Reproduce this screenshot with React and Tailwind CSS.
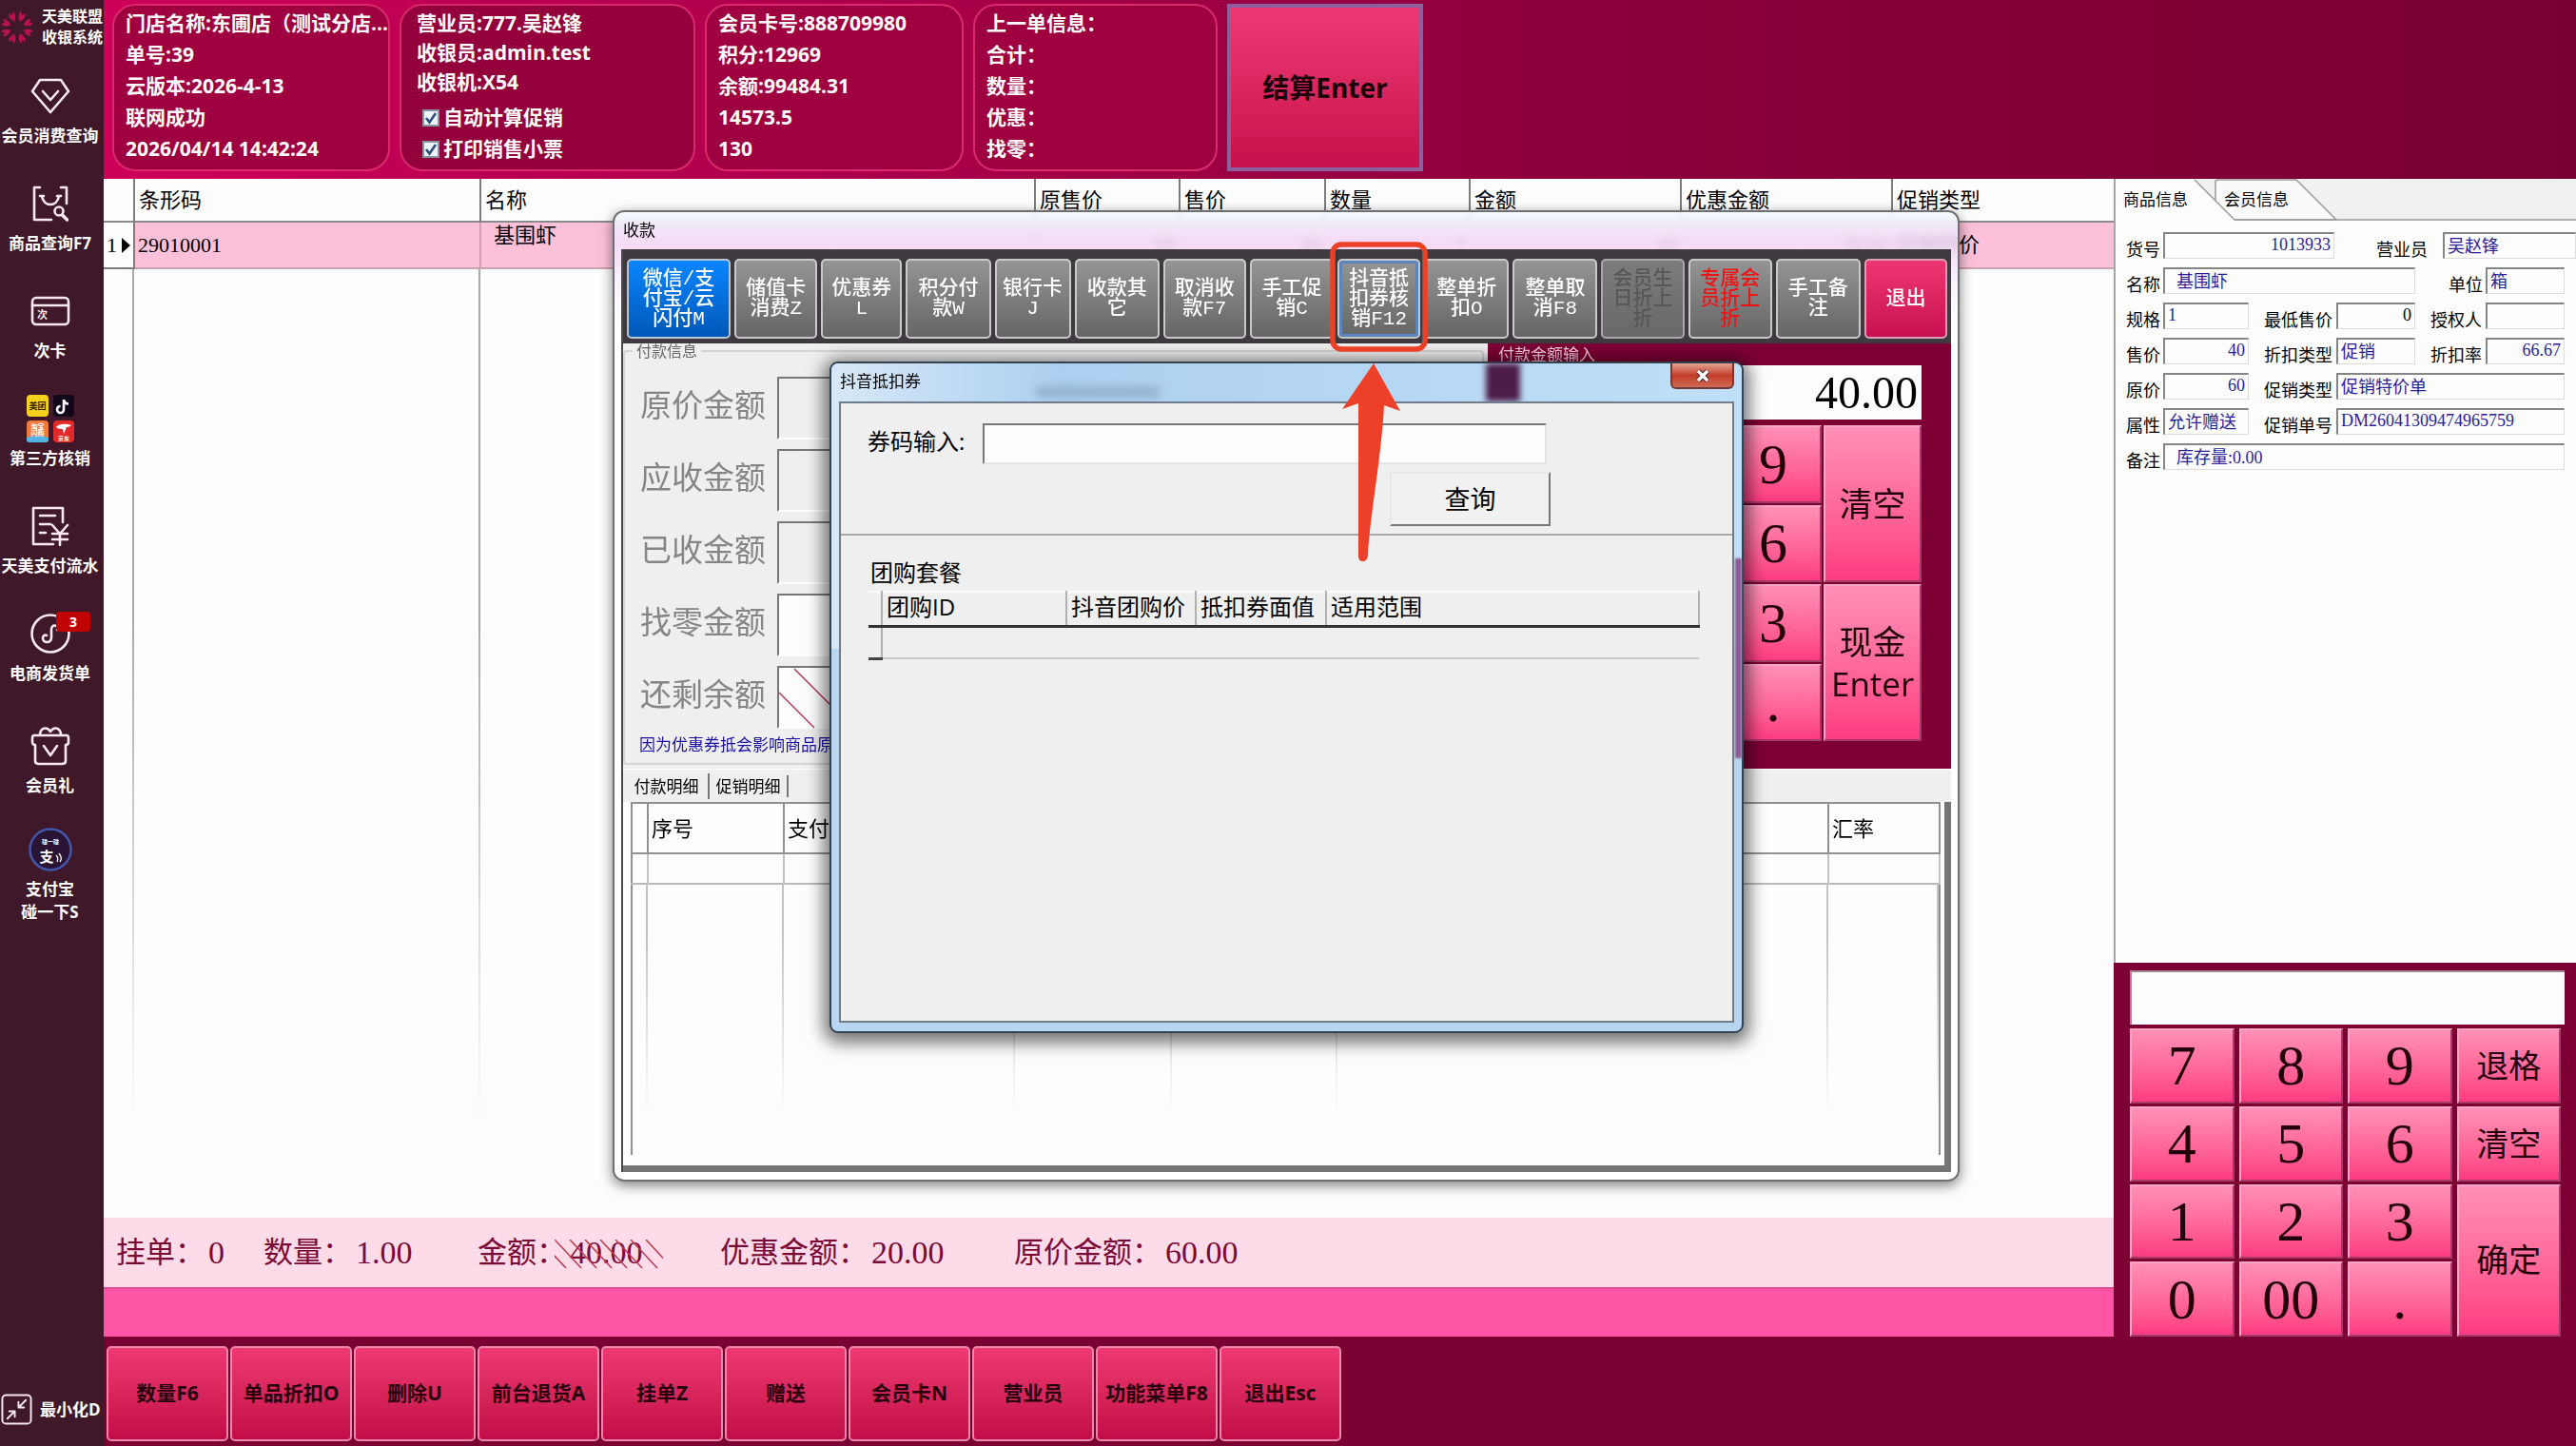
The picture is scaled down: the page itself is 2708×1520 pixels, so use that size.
import { useState } from "react";

const storeInfo = ["门店名称:东圃店（测试分店...", "单号:39", "云版本:2026-4-13", "联网成功", "2026/04/14 14:42:24"];
const memberInfo = ["会员卡号:888709980", "积分:12969", "余额:99484.31", "14573.5", "130"];
const lastOrder = ["上一单信息：", "合计：", "数量：", "优惠：", "找零："];

const payButtons = [
  { text: "微信/支\n付宝/云\n闪付M", tone: "blue" },
  { text: "储值卡\n消费Z" },
  { text: "优惠券\nL" },
  { text: "积分付\n款W" },
  { text: "银行卡\nJ" },
  { text: "收款其\n它" },
  { text: "取消收\n款F7" },
  { text: "手工促\n销C" },
  { text: "抖音抵\n扣券核\n销F12", tone: "active" },
  { text: "整单折\n扣O" },
  { text: "整单取\n消F8" },
  { text: "会员生\n日折上\n折", tone: "off" },
  { text: "专属会\n员折上\n折", tone: "red" },
  { text: "手工备\n注" },
  { text: "退出", tone: "pink" },
];

const payTones = {
  gray: "border-[#c9c9c9] bg-linear-to-b from-[#949494] to-[#666666] text-white",
  blue: "border-[#b9c6d6] bg-linear-to-b from-[#0a86ff] to-[#0058b8] text-white",
  active: "border-[#c9c9c9] bg-linear-to-b from-[#949494] to-[#666666] text-white shadow-[inset_0_0_0_3px_#5b86bd]",
  off: "border-[#a8a8a8] bg-linear-to-b from-[#7c7c7c] to-[#686868] text-[#575757]",
  red: "border-[#c9c9c9] bg-linear-to-b from-[#949494] to-[#666666] text-[#f01414]",
  pink: "border-[#d9a0b8] bg-linear-to-b from-[#ee3572] to-[#c80f50] text-white",
};

const bottomButtons = ["数量F6", "单品折扣O", "删除U", "前台退货A", "挂单Z", "赠送", "会员卡N", "营业员", "功能菜单F8", "退出Esc"];

function InfoPanel({ lines, className }) {
  return (
    <ul className={`h-[176px] rounded-[24px] border-2 border-[#d92a6c] bg-[#9e0040] pt-[2px] pl-3 ${className}`}>
      {lines.map((line) => (
        <li key={line} className="h-[33px] whitespace-nowrap leading-[33px]">
          {line}
        </li>
      ))}
    </ul>
  );
}

function CheckItem({ id, label }) {
  const [checked, setChecked] = useState(true);
  return (
    <div className="flex h-[33px] items-center gap-1">
      <span className="grid size-[18px]">
        <input
          id={id}
          type="checkbox"
          checked={checked}
          onChange={(e) => setChecked(e.target.checked)}
          className="col-start-1 row-start-1 size-[18px] appearance-none border-2 border-[#8796a5] bg-[#eef3f7]"
        />
        {checked && (
          <svg viewBox="0 0 18 18" className="pointer-events-none col-start-1 row-start-1 size-[18px]">
            <path d="M4 9l3.5 4.5L14 4" fill="none" stroke="#2f4f7a" strokeWidth="2.6" />
          </svg>
        )}
      </span>
      <label htmlFor={id}>{label}</label>
    </div>
  );
}

function Header() {
  return (
    <header className="flex h-[188px] gap-[10px] bg-linear-to-r from-[#cd0059] via-[#8c003b] via-60% to-[#780031] pt-1 pl-[9px] text-[21px] font-bold text-white">
      <InfoPanel lines={storeInfo} className="w-[292px]" />
      <div className="h-[176px] w-[311px] rounded-[24px] border-2 border-[#d92a6c] bg-[#94003c] pt-[2px] pl-4">
        <p className="h-[31px] leading-[33px]">营业员:777.吴赵锋</p>
        <p className="h-[31px] leading-[33px]">收银员:admin.test</p>
        <p className="mb-1 h-[33px] leading-[33px]">收银机:X54</p>
        <div className="pl-[6px]">
          <CheckItem id="auto-promo" label="自动计算促销" />
          <CheckItem id="print-ticket" label="打印销售小票" />
        </div>
      </div>
      <InfoPanel lines={memberInfo} className="w-[272px]" />
      <InfoPanel lines={lastOrder} className="w-[257px]" />
      <button className="h-[176px] w-[206px] border-4 border-[#8d5f9c] bg-linear-to-b from-[#ee3874] to-[#c60f4b] text-[28px] font-bold text-[#1a0008]">
        结算Enter
      </button>
    </header>
  );
}

function SideItem({ label, children, className = "mt-9" }) {
  return (
    <button className={`relative flex w-full flex-col items-center gap-[7px] pr-1 text-[17px] leading-6 text-white ${className}`}>
      <span className="flex h-[46px] items-center justify-center">{children}</span>
      <span className="whitespace-pre">{label}</span>
    </button>
  );
}

function Sidebar() {
  const line = { fill: "none", stroke: "#fbe9f1", strokeWidth: 2.6, strokeLinejoin: "round", strokeLinecap: "round" };
  return (
    <nav className="flex w-[109px] shrink-0 flex-col bg-[#3f1829] font-bold">
      <div className="flex h-[78px] gap-2 pt-[6px]">
        <svg viewBox="0 0 36 36" className="mt-[5px] size-9">
          {[22, 67, 112, 157, 202, 247, 292, 337].map((a) => (
            <path key={a} d="M18 11C14 7 14 3 15.500 1L18 4L20.500 1C22 3 22 7 18 11Z" fill="#b81150" transform={`rotate(${a} 18 18)`} />
          ))}
        </svg>
        <p className="text-[16px] leading-[22px] text-white">
          天美联盟
          <br />
          收银系统
        </p>
      </div>
      <SideItem label="会员消费查询" className="">
        <svg viewBox="0 0 42 38" className="h-[38px] w-[42px]">
          <path d="M10 2h22l8 12-19 22L2 14z" {...line} />
          <path d="M13 14l8 9 8-9" {...line} />
        </svg>
      </SideItem>
      <SideItem label="商品查询F7">
        <svg viewBox="0 0 38 38" className="size-[38px]">
          <path d="M8 2H2v34h18M30 2h6v17" {...line} />
          <path d="M10 11c2 12 16 12 18 0M8 11h4M26 11h4" {...line} />
          <circle cx="28" cy="27" r="4.500" {...line} />
          <path d="M31.500 31l5 5" {...line} strokeWidth="3.500" />
        </svg>
      </SideItem>
      <SideItem label="次卡">
        <svg viewBox="0 0 42 32" className="h-8 w-[42px]">
          <rect x="2" y="2" width="38" height="28" rx="4" {...line} />
          <path d="M2 10h38" {...line} />
          <text x="7" y="24" fontSize="11" fill="#fbe9f1">次</text>
        </svg>
      </SideItem>
      <SideItem label="第三方核销">
        <svg viewBox="0 0 50 50" className="size-[50px]">
          <rect width="23" height="23" rx="4" fill="#f5d01c" />
          <text x="11.500" y="15" fontSize="9" fontWeight="bold" textAnchor="middle" fill="#2c2407">美团</text>
          <rect x="28" width="22" height="23" rx="4" fill="#12061a" />
          <path d="M39 5v10.500a3.500 3.500 0 1 1-3.500-3.500M39 5c.5 3 2 4.500 5 4.500" fill="none" stroke="#fff" strokeWidth="2.600" />
          <rect y="27" width="23" height="23" rx="4" fill="#f07a3a" />
          <path d="M0 45q11 -4 23 0v2a3 3 0 0 1-3 3H3a3 3 0 0 1-3-3z" fill="#56b4e6" />
          <text x="11.500" y="36" fontSize="7" fontWeight="bold" textAnchor="middle" fill="#fff">淘宝</text>
          <text x="11.500" y="43" fontSize="7" fontWeight="bold" textAnchor="middle" fill="#fff">闪购</text>
          <rect x="28" y="27" width="22" height="23" rx="4" fill="#e32a2a" />
          <path d="M31 34c3-4 11-4 16-2-2 2-4 2-5 2l-3 7-1-5c-2 0-5 0-7-2z" fill="#fff" />
          <text x="39" y="48" fontSize="6" textAnchor="middle" fill="#fff">京东</text>
        </svg>
      </SideItem>
      <SideItem label="天美支付流水">
        <svg viewBox="0 0 40 42" className="h-[42px] w-10">
          <path d="M33 17V2H2v38h21M9 10h16M9 19h11M9 28h6" {...line} />
          <path d="M22 20l8 9 8-9M30 29v12M22 29h16M22 35h16" {...line} />
        </svg>
      </SideItem>
      <SideItem label="电商发货单">
        <svg viewBox="0 0 42 42" className="size-[42px]">
          <circle cx="21" cy="21" r="19.500" {...line} />
          <path d="M28 17c2-5-6-7-6 0v8c0 7-9 6-9 1 0-3 2-4 4-3" {...line} />
        </svg>
        <span className="absolute top-0 right-[14px] h-[21px] w-9 rounded bg-[#c00404] text-[14px] leading-[21px] font-bold">3</span>
      </SideItem>
      <SideItem label="会员礼" className="mt-[41px]">
        <svg viewBox="0 0 42 42" className="size-[42px]">
          <path d="M4 10h34q2 0 2 3v4q0 3-3 3v17q0 3-4 3H9q-4 0-4-3V20q-3 0-3-3v-4q0-3 2-3z" {...line} />
          <path d="M10 10c0-8 7-10 11-4 4-6 11-4 11 4M14 21l7 10 7-10" {...line} />
        </svg>
      </SideItem>
      <SideItem label={"支付宝\n碰一下S"} className="mt-8">
        <svg viewBox="0 0 46 46" className="size-[46px]">
          <circle cx="23" cy="23" r="21.500" fill="#2a1436" stroke="#4257ae" strokeWidth="2.400" />
          <text x="23" y="17" fontSize="6" textAnchor="middle" fill="#fff">碰一碰</text>
          <text x="19" y="36" fontSize="15" fontWeight="bold" textAnchor="middle" fill="#fff">支</text>
          <path d="M29 29q3 3 1 7M32 27q4 5 1 9" fill="none" stroke="#fff" strokeWidth="1.300" />
        </svg>
      </SideItem>
      <button className="mt-auto mb-[22px] flex items-center gap-2 pl-px text-[17px] text-white">
        <svg viewBox="0 0 34 34" className="size-[33px] shrink-0">
          <rect x="1.500" y="1.500" width="31" height="31" rx="4" {...line} strokeWidth="2" />
          <path d="M27 7l-7 7M19 9v6h6M7 27l7-7M9 19h6v6" {...line} strokeWidth="2" />
        </svg>
        <span className="whitespace-nowrap">最小化D</span>
      </button>
    </nav>
  );
}

function GoodsTable() {
  const heads = ["条形码", "名称", "原售价", "售价", "数量", "金额", "优惠金额", "促销类型"];
  return (
    <table className="w-full table-fixed border-collapse bg-[#fdfdfd] text-left text-[22px] text-black">
      <colgroup>
        <col className="w-8" />
        <col className="w-[364px]" />
        <col className="w-[583px]" />
        <col className="w-[152px]" />
        <col className="w-[153px]" />
        <col className="w-[152px]" />
        <col className="w-[222px]" />
        <col className="w-[222px]" />
        <col />
      </colgroup>
      <thead>
        <tr className="h-[45px] border-b-2 border-[#8a8a8a]">
          <th className="border-r-2 border-[#7d7d7d]"></th>
          {heads.map((h) => (
            <th key={h} className="border-r-2 border-[#7d7d7d] pb-[3px] pl-1 leading-7 font-normal last:border-r-0">
              {h}
            </th>
          ))}
        </tr>
      </thead>
      <tbody>
        <tr className="h-[49px] border-b-2 border-[#c9a3b3] bg-[#fcc1d9] font-['Liberation_Serif','Noto_Sans_CJK_SC',serif]">
          <td className="border-r-2 border-b-2 border-[#7d7d7d] bg-[#fdfdfd]">
            <span className="flex items-center justify-between px-[3px]">
              1
              <svg viewBox="0 0 9 16" className="h-4 w-[9px]">
                <path d="M0 0l9 8-9 8z" />
              </svg>
            </span>
          </td>
          <td className="border-r-2 border-[#c9a3b3] pl-[3px]">29010001</td>
          <td className="border-r-2 border-[#c9a3b3] pb-5 pl-[13px] leading-6">基围虾</td>
          <td className="pr-1 text-right">60</td>
          <td className="pr-1 text-right">40</td>
          <td className="pr-1 text-right">1</td>
          <td className="pr-1 text-right">40</td>
          <td className="pr-1 text-right">20.00</td>
          <td className="pl-1">促销特价</td>
        </tr>
        <tr className="h-[900px]">
          {["", ...heads].map((h) => (
            <td key={h} className="bg-linear-to-b from-[#a9a9a9] from-40% to-transparent bg-[length:2px_100%] bg-right bg-no-repeat last:bg-none"></td>
          ))}
        </tr>
      </tbody>
    </table>
  );
}

function Summary() {
  const items = [
    { label: "挂单：", value: "0", width: "w-[155px]" },
    { label: "数量：", value: "1.00", width: "w-[225px]" },
    { label: "金额：", value: "40.00", width: "w-[255px]", hatch: true },
    { label: "优惠金额：", value: "20.00", width: "w-[309px]" },
    { label: "原价金额：", value: "60.00", width: "w-[309px]" },
  ];
  return (
    <dl className="flex h-[73px] items-center bg-[#fddbe9] pl-[13px] font-['Liberation_Serif','Noto_Sans_CJK_SC',serif] text-[31px] leading-9 text-[#7b0a37]">
      {items.map((item) => (
        <div key={item.label} className={`flex ${item.width}`}>
          <dt>{item.label}</dt>
          <dd className="relative pl-1 text-[34px]">
            {item.value}
            {item.hatch && (
              <svg viewBox="0 0 114 32" className="absolute top-1 -left-3 h-8 w-[114px]" stroke="#c23a4a" strokeWidth="1.500">
                {[-16, 0, 16, 32, 48, 64, 80, 96].map((x) => (
                  <path key={x} d={`M${x} 0l28 30`} />
                ))}
              </svg>
            )}
          </dd>
        </div>
      ))}
    </dl>
  );
}

function Field({ id, label, value, labelClass = "w-[35px]", inputClass, textClass = "text-[#2a1d9c]", gap = "gap-[4px]" }) {
  return (
    <div className={`flex h-[28px] ${gap}`}>
      <label htmlFor={id} className={`shrink-0 pt-[6px] text-right text-[18px] leading-6 whitespace-nowrap text-black ${labelClass}`}>
        {label}
      </label>
      <input
        id={id}
        readOnly
        value={value}
        className={`h-[28px] min-w-0 border-t-2 border-r border-b border-l-2 border-t-[#858585] border-r-[#dcdcdc] border-b-[#dcdcdc] border-l-[#858585] bg-[#fdfdfd] px-[3px] pb-[3px] font-['Liberation_Serif','Noto_Sans_CJK_SC',serif] text-[18px] outline-none ${textClass} ${inputClass}`}
      />
    </div>
  );
}

function GoodsInfo() {
  return (
    <section className="flex-1 border-l-2 border-[#a5a5a5] bg-[#fdfdfd]">
      <div className="relative flex h-[44px] bg-[#f0f0f0] text-[17px] text-black">
        <svg viewBox="0 0 484 44" preserveAspectRatio="xMinYMin slice" className="absolute inset-0 h-full w-full">
          <path d="M105 43V3q0-2 3-2h82l42 42z" fill="#fafafa" stroke="#9b9b9b" strokeWidth="1.500" />
          <path d="M0 44V1h83l42 42v1z" fill="#fdfdfd" />
          <path d="M83 1l42 42H484" fill="none" stroke="#9b9b9b" strokeWidth="1.500" />
        </svg>
        <button className="relative w-[106px] pl-2 text-left">商品信息</button>
        <button className="relative pl-2 text-left">会员信息</button>
      </div>
      <form className="flex flex-col gap-[9px] pt-[12px] pl-[11px]">
        <div className="flex justify-between">
          <Field id="sku" label="货号" value="1013933" inputClass="w-[180px] text-right" />
          <Field id="clerk" label="营业员" value="吴赵锋" labelClass="w-[54px]" inputClass="w-[140px]" gap="gap-4" />
        </div>
        <div className="flex justify-between pr-3">
          <Field id="name" label="名称" value="&nbsp;&nbsp;基围虾" inputClass="w-[265px]" />
          <Field id="unit" label="单位" value="箱" inputClass="w-[83px]" />
        </div>
        <div className="flex justify-between pr-3">
          <Field id="spec" label="规格" value="1" inputClass="w-[90px]" />
          <Field id="min-price" label="最低售价" value="0" labelClass="w-[72px]" inputClass="w-[83px] text-right" textClass="text-black" />
          <Field id="auth" label="授权人" value="" labelClass="w-[54px]" inputClass="w-[83px]" />
        </div>
        <div className="flex justify-between pr-3">
          <Field id="price" label="售价" value="40" inputClass="w-[90px] text-right" />
          <Field id="discount-type" label="折扣类型" value="促销" labelClass="w-[72px]" inputClass="w-[83px]" />
          <Field id="discount-rate" label="折扣率" value="66.67" labelClass="w-[54px]" inputClass="w-[83px] text-right" />
        </div>
        <div className="flex justify-between pr-3">
          <Field id="origin" label="原价" value="60" inputClass="w-[90px] text-right" />
          <Field id="promo-type" label="促销类型" value="促销特价单" labelClass="w-[72px]" inputClass="w-[240px]" />
        </div>
        <div className="flex justify-between pr-3">
          <Field id="attr" label="属性" value="允许赠送" inputClass="w-[90px]" />
          <Field id="promo-no" label="促销单号" value="DM26041309474965759" labelClass="w-[72px]" inputClass="w-[240px]" />
        </div>
        <div className="flex justify-between pr-3">
          <Field id="remark" label="备注" value="&nbsp;&nbsp;库存量:0.00" inputClass="w-[422px]" />
        </div>
      </form>
    </section>
  );
}

function Key({ text, className = "" }) {
  return (
    <button className={`border-2 border-t-[#f7a6c3] border-r-[#a53a66] border-b-[#a53a66] border-l-[#f7a6c3] bg-linear-to-b from-[#ff8fb6] to-[#fd3a81] whitespace-pre-line text-[#22000c] ${className}`}>
      {text}
    </button>
  );
}

const digit = "font-['Liberation_Serif',serif] text-[60px] leading-none";

function Keypad() {
  return (
    <section className="bg-[#7d0033] pt-2 pr-3 pl-[17px]">
      <input aria-label="数字输入" className="h-[57px] w-full border-t-2 border-l-2 border-[#a08a90] bg-[#fdfdfd] px-2 text-[32px] outline-none" />
      <div className="mt-1 mr-1 grid h-[324px] grid-cols-4 grid-rows-4 gap-x-[5px] gap-y-[3px] text-[34px]">
        <Key text="7" className={digit} />
        <Key text="8" className={digit} />
        <Key text="9" className={digit} />
        <Key text="退格" />
        <Key text="4" className={digit} />
        <Key text="5" className={digit} />
        <Key text="6" className={digit} />
        <Key text="清空" />
        <Key text="1" className={digit} />
        <Key text="2" className={digit} />
        <Key text="3" className={digit} />
        <Key text="确定" className="row-span-2" />
        <Key text="0" className={digit} />
        <Key text="00" className={digit} />
        <Key text="." className={digit} />
      </div>
    </section>
  );
}

function PayDialog() {
  const rows = [
    { id: "pay-origin", label: "原价金额", value: "60.00" },
    { id: "pay-due", label: "应收金额", value: "40.00" },
    { id: "pay-done", label: "已收金额", value: "0.00" },
    { id: "pay-change", label: "找零金额", value: "0.00", white: true },
    { id: "pay-left", label: "还剩余额", value: "40.00", white: true, hatch: true },
  ];
  return (
    <div
      role="dialog"
      aria-label="收款"
      className="absolute top-[33px] left-[535px] flex h-[1021px] w-[1416px] flex-col overflow-hidden rounded-[12px] border-2 border-[#6f6f73] bg-linear-to-b from-[#f1fcff]/85 via-[#f3e0fb]/85 via-[30px] to-white to-[120px] px-[7px] pb-2 shadow-[0_4px_14px_rgba(0,0,0,0.5)] backdrop-blur-[4px]"
    >
      <h2 className="h-[39px] pl-[2px] text-[17px] leading-[37px] text-black">收款</h2>
      <div className="flex flex-1 flex-col border-l-2 border-[#4a4a4e] bg-[#efefef]">
        <div className="grid h-[99px] grid-cols-[109fr_87fr_85fr_89fr_80fr_89fr_87fr_88fr_87fr_89fr_89fr_87fr_88fr_89fr_87fr] gap-[4px] bg-[#3e3a3f] px-[4px] pt-[10px] pb-[5px]">
          {payButtons.map((b) => (
            <button
              key={b.text}
              className={`rounded-[5px] border-2 font-['Liberation_Mono','Noto_Sans_CJK_SC',monospace] text-[21px] leading-[21px] font-medium whitespace-pre ${payTones[b.tone || "gray"]}`}
            >
              {b.text}
            </button>
          ))}
        </div>
        <div className="flex h-[447px]">
          <fieldset className="mr-1 mb-1 flex-1 rounded border-2 border-[#d4d4d4] pl-4">
            <legend className="-ml-2 px-1 text-[16px] leading-4 text-[#666]">付款信息</legend>
            <div className="flex flex-col gap-[10px] pt-[19px]">
              {rows.map((r) => (
                <div key={r.id} className="flex">
                  <label htmlFor={r.id} className="w-[144px] text-[33px] leading-[60px] text-[#858585]">
                    {r.label}
                  </label>
                  <div className="relative">
                    <input
                      id={r.id}
                      readOnly
                      value={r.value}
                      className={`block h-[66px] w-[422px] border-t-2 border-r-2 border-b-2 border-l-2 border-t-[#777] border-r-white border-b-white border-l-[#777] px-2 text-right font-['Liberation_Serif',serif] text-[44px] text-[#888] ${r.white ? "bg-[#fdfdfd]" : "bg-[#efefef]"}`}
                    />
                    {r.hatch && (
                      <svg viewBox="0 0 60 66" className="absolute top-0 left-0 h-[66px] w-[60px]" stroke="#b83a58" strokeWidth="1.500">
                        <path d="M18 3l40 40M2 28l37 37" />
                      </svg>
                    )}
                  </div>
                </div>
              ))}
            </div>
            <p className="mt-[5px] -ml-px text-[17px] leading-6 text-[#1a10a8]">因为优惠券抵会影响商品原价</p>
          </fieldset>
          <div className="w-[487px] bg-[#7d0033] pr-[31px] pl-[39px]">
            <label htmlFor="pay-amount" className="-ml-7 block h-[23px] text-[17px] leading-6 text-[#f3c9d9]">
              付款金额输入
            </label>
            <input
              id="pay-amount"
              defaultValue="40.00"
              className="h-[57px] w-full bg-[#fdfdfd] px-1 text-right font-['Liberation_Serif',serif] text-[48px] text-black outline-none"
            />
            <div className="mt-[6px] grid h-[332px] grid-cols-4 grid-rows-4 gap-[2px] text-[35px] leading-[44px]">
              <Key text="7" className={digit} />
              <Key text="8" className={digit} />
              <Key text="9" className={digit} />
              <Key text="清空" className="row-span-2" />
              <Key text="4" className={digit} />
              <Key text="5" className={digit} />
              <Key text="6" className={digit} />
              <Key text="1" className={digit} />
              <Key text="2" className={digit} />
              <Key text="3" className={digit} />
              <Key text={"现金\nEnter"} className="row-span-2" />
              <Key text="0" className={digit} />
              <Key text="00" className={digit} />
              <Key text="." className={digit} />
            </div>
          </div>
        </div>
        <div className="flex h-[35px] items-center border-t border-white text-[17px] text-black">
          <button className="h-[27px] w-[91px] border-r-2 border-[#777] pl-[2px] leading-[23px]">付款明细</button>
          <button className="h-[23px] w-[83px] border-r-2 border-[#777] leading-[21px]">促销明细</button>
        </div>
        <div className="flex-1 border-r-[7px] border-b-[7px] border-[#757575] bg-[#fdfdfd] pr-1 pl-2">
          <table className="w-full table-fixed border-collapse border-x-2 border-t-2 border-[#909090] text-left text-[22px]">
            <colgroup>
              <col className="w-[17px]" />
              <col className="w-[143px]" />
              <col className="w-[243px]" />
              <col className="w-[165px]" />
              <col className="w-[174px]" />
              <col className="w-[516px]" />
              <col />
            </colgroup>
            <thead>
              <tr className="h-[53px] border-b-2 border-[#909090]">
                {["", "序号", "支付方式", "金额", "币种", "备注", "汇率"].map((h) => (
                  <th key={h} className="border-r-2 border-[#909090] pl-[3px] font-normal">
                    {h}
                  </th>
                ))}
              </tr>
            </thead>
            <tbody>
              <tr className="h-[32px] border-b-2 border-[#b9b9b9]">
                {[1, 2, 3, 4, 5, 6, 7].map((n) => (
                  <td key={n} className="border-r-2 border-[#c4c4c4]"></td>
                ))}
              </tr>
              <tr className="h-[285px]">
                {[1, 2, 3, 4, 5, 6, 7].map((n) => (
                  <td key={n} className="bg-linear-to-b from-[#c4c4c4] from-20% to-transparent to-85% bg-[length:2px_100%] bg-right bg-no-repeat"></td>
                ))}
              </tr>
            </tbody>
          </table>
        </div>
      </div>
      <CouponDialog />
    </div>
  );
}

function CouponDialog() {
  return (
    <div
      role="dialog"
      aria-label="抖音抵扣券"
      className="absolute top-[157px] left-[226px] flex h-[706px] w-[961px] flex-col rounded-[9px] border-2 border-[#34424f] bg-[#b8d6f2] px-2 pb-[9px] shadow-[0_4px_18px_6px_rgba(0,0,0,0.55)]"
    >
      <div className="absolute inset-x-0 top-0 h-[300px] rounded-t-[7px] bg-linear-to-r from-[#d6e8f7] via-[#add0f0] via-25% to-[#c0dff8]"></div>
      {/* what the glass frame lets through from the window below */}
      <div className="absolute top-0 left-[688px] h-[40px] w-9 bg-[#4d1c47] blur-[3px]"></div>
      <div className="absolute top-[24px] left-[215px] h-3 w-[130px] bg-[#7f9bb8] opacity-60 blur-[5px]"></div>
      <div className="absolute top-[205px] right-0 h-[210px] w-[7px] bg-[#8e5a94] blur-[1px]"></div>
      <div className="relative flex h-[40px] justify-between text-black">
        <h2 className="pl-px text-[17px] leading-[37px]">抖音抵扣券</h2>
        <button aria-label="关闭" className="flex h-[27px] w-[67px] items-center justify-center rounded-b-[6px] border-2 border-t-0 border-[#6b3a3a] bg-linear-to-b from-[#e2a193] via-[#c23c28] via-50% to-[#d06a50]">
          <svg viewBox="0 0 16 14" className="h-[14px] w-4">
            <path d="M3 2l10 10M13 2L3 12" stroke="#4a3038" strokeWidth="5.500" />
            <path d="M3 2l10 10M13 2L3 12" stroke="#fff" strokeWidth="3.200" />
          </svg>
        </button>
      </div>
      <div className="relative flex-1 border-2 border-[#6f7d8b] bg-[#efefef] text-[24px] text-black">
        <div className="h-[139px] border-b-2 border-[#a9a9a9] pt-[21px] pl-[28px]">
          <div className="flex">
            <label htmlFor="coupon-code" className="w-[121px] leading-[38px]">
              券码输入:
            </label>
            <input
              id="coupon-code"
              className="h-[43px] w-[593px] border-2 border-t-[#777] border-r-[#e3e3e3] border-b-[#e3e3e3] border-l-[#777] bg-[#fdfdfd] px-2 outline-none"
            />
          </div>
          <button className="mt-[8px] ml-[549px] block h-[57px] w-[169px] border-2 border-t-[#e8e8e8] border-r-[#777] border-b-[#777] border-l-[#e8e8e8] bg-[#f1f1f1] text-[27px] leading-[52px]">
            查询
          </button>
        </div>
        <h3 className="mt-[21px] mb-px pl-[31px] leading-[36px]">团购套餐</h3>
        <table className="ml-[29px] w-[874px] table-fixed border-collapse text-left">
          <colgroup>
            <col className="w-[14px]" />
            <col className="w-[194px]" />
            <col className="w-[136px]" />
            <col className="w-[137px]" />
            <col />
          </colgroup>
          <thead>
            <tr className="h-[36px] border-b-[3px] border-[#333]">
              {["", "团购ID", "抖音团购价", "抵扣券面值", "适用范围"].map((h) => (
                <th key={h} className="border-t-2 border-r-2 border-t-[#fafafa] border-r-[#b0b0b0] pb-1 pl-1 leading-7 font-normal whitespace-nowrap">
                  {h}
                </th>
              ))}
            </tr>
          </thead>
          <tbody>
            <tr className="h-[34px]">
              <td className="border-r-2 border-b-[3px] border-r-[#b0b0b0] border-b-[#444]"></td>
              <td colSpan={4} className="border-b-2 border-[#c9c9c9]"></td>
            </tr>
          </tbody>
        </table>
      </div>
    </div>
  );
}

function Marker() {
  return (
    <svg viewBox="0 0 104 346" className="pointer-events-none absolute top-[65px] left-[1288px] h-[346px] w-[104px]">
      <rect x="4" y="4" width="97" height="110" rx="9" fill="none" stroke="#ec4028" strokeWidth="5.500" />
      <path d="M47 129L75 179L58 173C55 230 43 290 41 331Q40 337 36 337Q31 337 31 332V171L14 177Z" fill="#ec4028" />
    </svg>
  );
}

export default function App() {
  return (
    <div className="flex min-h-screen w-full bg-[#7b0032] font-['Open_Sans','Noto_Sans_CJK_SC',sans-serif]">
      <Sidebar />
      <div className="flex min-w-0 flex-1 flex-col">
        <Header />
        <main className="relative flex flex-1">
          <div className="flex min-w-0 flex-1 flex-col">
            <div className="flex-1 bg-[#fdfdfd]">
              <GoodsTable />
            </div>
            <Summary />
            <div className="h-[52px] border-t-2 border-[#e04a94] bg-[#fd55a5]"></div>
          </div>
          <aside className="flex w-[486px] shrink-0 flex-col">
            <GoodsInfo />
            <Keypad />
          </aside>
          <PayDialog />
          <Marker />
        </main>
        <footer className="flex h-[115px] gap-[2px] pt-[10px] pl-[3px]">
          {bottomButtons.map((text) => (
            <button
              key={text}
              className="h-[100px] w-[128px] rounded-[5px] border-2 border-[#e889ac] bg-linear-to-b from-[#ee3872] to-[#c20c47] text-[21px] font-bold text-[#26000d]"
            >
              {text}
            </button>
          ))}
        </footer>
      </div>
    </div>
  );
}
